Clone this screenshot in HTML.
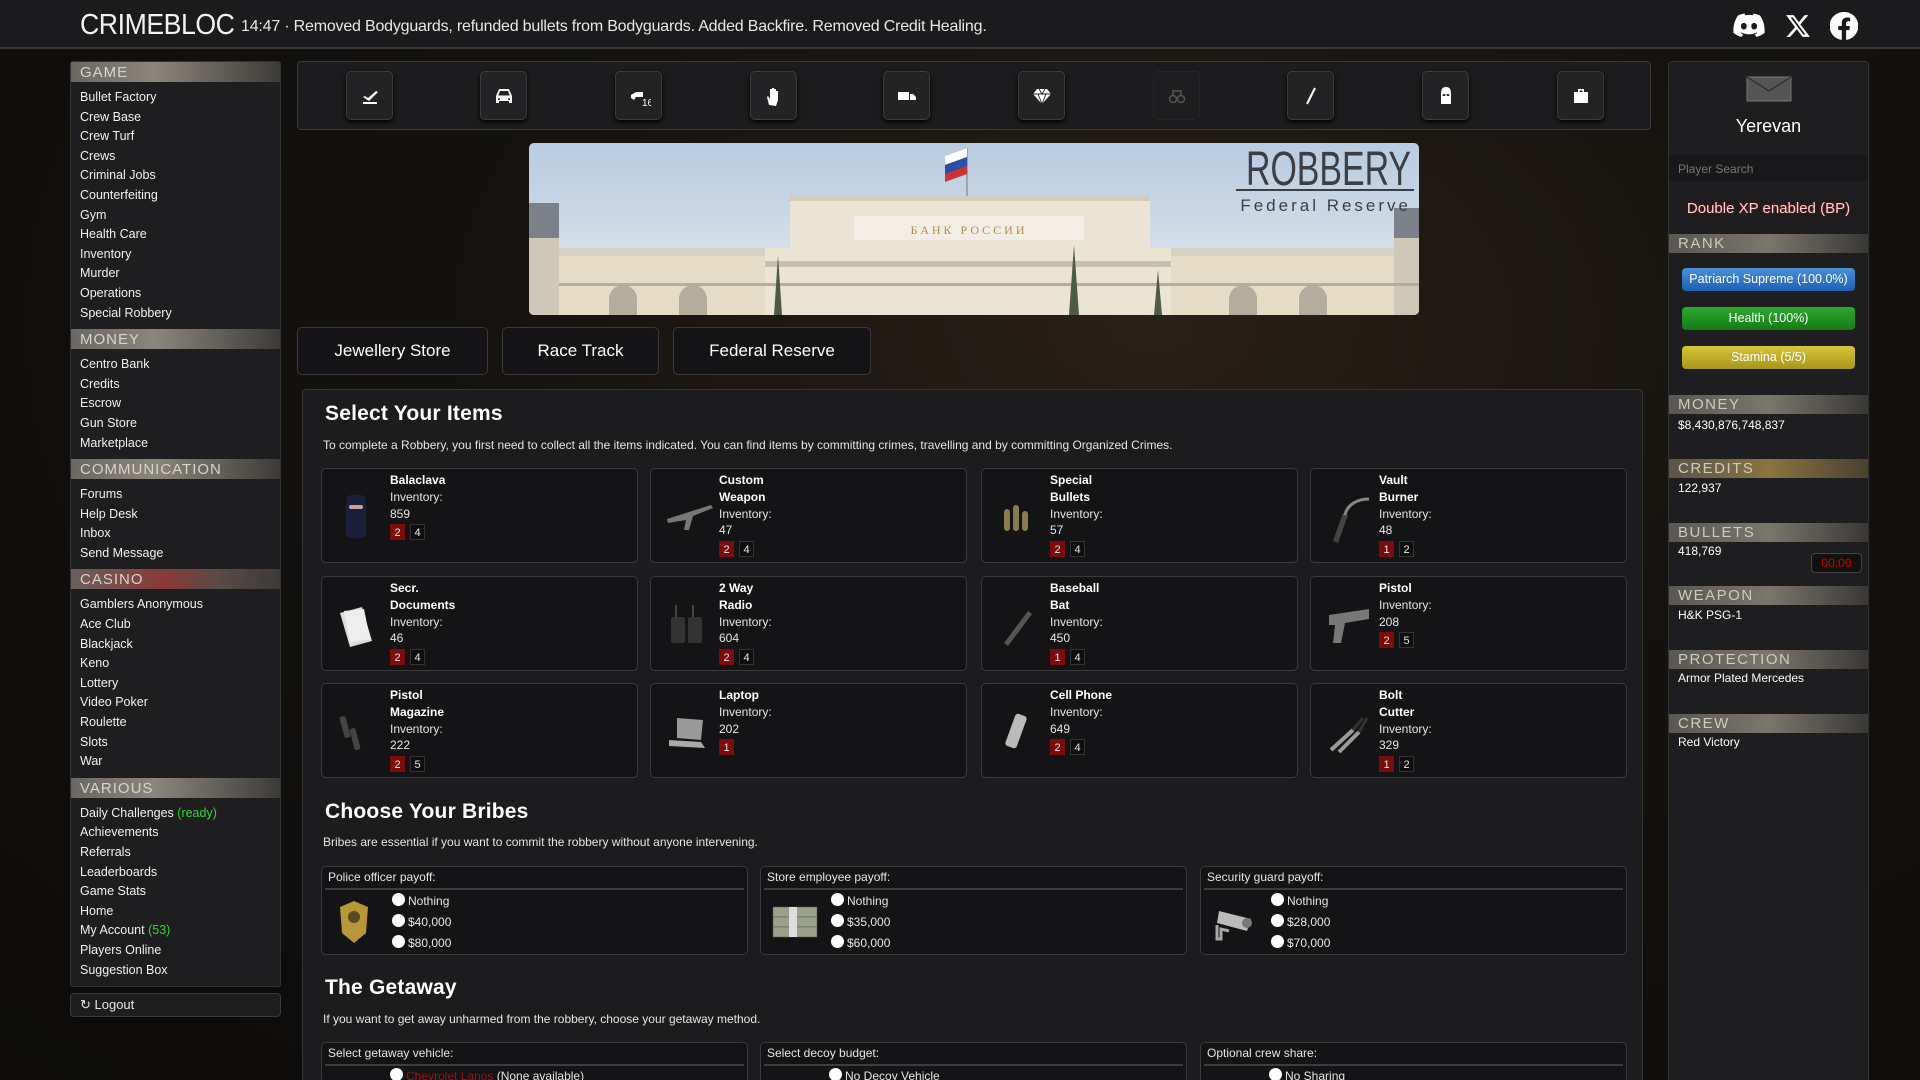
<!DOCTYPE html>
<html><head><meta charset="utf-8"><style>
*{box-sizing:border-box;margin:0;padding:0}
html{width:1920px;height:1080px;overflow:hidden}
body{width:1920px;height:1080px;overflow:hidden;background:radial-gradient(ellipse at 60% 30%,#2a2118 0%,#15120f 40%,#0c0b0a 100%);font-family:"Liberation Sans",sans-serif;color:#e6e6e6;position:relative}
.a{position:absolute}
#top{left:0;top:0;width:1920px;height:49px;background:#1b1a1c;border-bottom:2px solid #3a3836}
#logo{left:80px;top:9px;font-size:29px;color:#f2f2f2;letter-spacing:-0.5px;transform:scaleX(.92);transform-origin:left}
#news{left:241px;top:18px;font-size:16px;color:#e8e8e8;letter-spacing:-0.2px}
#side{left:70px;top:61px;width:211px;height:926px;background:#1e1d1f;border:1px solid #333;border-radius:3px;font-size:12.5px}
.hd{height:20px;background:linear-gradient(90deg,#6a6762,#8b867c 40%,#3d3b38);color:#d8d4cc;font-size:15px;letter-spacing:1px;padding:1px 9px;line-height:19px}
.ls{padding:6px 9px}
.ls div{height:19.6px;line-height:19.6px;color:#f2f2f2}
.g{color:#37d437}
#logout{left:70px;top:993px;width:211px;height:24px;background:#1e1d1f;border:1px solid #3a3a3a;border-radius:4px;font-size:13px;padding:3px 9px}
#ibar{left:297px;top:61px;width:1354px;height:69px;background:#1c1b1d;border:1px solid #3a3a3c;border-radius:4px}
.ib{position:absolute;top:9px;width:47px;height:49px;background:#232224;border:1px solid #3c3c3e;border-radius:5px;box-shadow:0 2px 4px #000}
.ib svg{position:absolute;left:13px;top:14px}
#ban{left:529px;top:143px;width:890px;height:172px;border-radius:5px;overflow:hidden}
.tab{position:absolute;top:327px;height:48px;background:#141315;border:1px solid #3a393c;border-radius:5px;font-size:17px;color:#fff;text-align:center;line-height:46px}
#main{left:302px;top:389px;width:1341px;height:691px;background:#1c1b1d;border:1px solid #333;border-bottom:none;border-radius:4px 4px 0 0}
h2{position:absolute;font-size:21px;font-weight:bold;color:#fff;letter-spacing:.2px}
.p{position:absolute;font-size:12px;color:#e6e6e6}
.card{position:absolute;width:317px;height:95px;background:#141316;border:1px solid #3a393c;border-radius:5px;font-size:12px;line-height:16.8px}
.card .t{position:absolute;left:68px;top:3px}
.card b{color:#fff}
.card svg{position:absolute;left:14px;top:22px}
.bd{display:inline-block;width:15px;height:16px;line-height:16px;text-align:center;font-size:11px;margin-right:5px;margin-top:2px;background:#0e0e10;border:1px solid #333}
.bd.r{background:#7c0b0b;border-color:#7c0b0b}
.box{position:absolute;width:427px;background:#141316;border:1px solid #3a393c;border-radius:5px;font-size:12px;overflow:hidden}
.box .tt{height:23px;line-height:21px;padding-left:3px;border-bottom:2px solid #3c3b3e;margin:0 3px}
.rad{position:absolute;left:70px;line-height:21px}
.rad i{display:inline-block;width:13px;height:13px;border-radius:50%;background:#fff;vertical-align:-1px;margin-right:3px}
#rp{left:1668px;top:61px;width:201px;height:1019px;background:#1e1d1f;border:1px solid #333;border-bottom:none;border-radius:4px 4px 0 0;font-size:12px}
.rh{position:absolute;left:0;width:199px;height:19px;background:linear-gradient(90deg,#5a5752,#7b766c 50%,#3a3835);color:#cfcac0;font-size:15px;letter-spacing:1.5px;padding-left:9px;line-height:19px}
.rv{position:absolute;left:9px;font-size:12px;color:#fff}
.bar{position:absolute;left:13px;width:173px;height:23px;border-radius:4px;color:#fff;text-align:center;line-height:23px;font-size:12.5px}
</style></head><body>
<div id="top" class="a"></div>
<div id="logo" class="a">CRIMEBLOC</div>
<div id="news" class="a">14:47 · Removed Bodyguards, refunded bullets from Bodyguards. Added Backfire. Removed Credit Healing.</div>
<svg class="a" style="left:1733px;top:13px" width="32" height="26" viewBox="0 0 32 26"><path fill="#fff" d="M27 2.5A26 26 0 0 0 20.5.5l-.8 1.7a24 24 0 0 0-7.4 0L11.5.5A26 26 0 0 0 5 2.5C1 8.5 0 14.3.5 20a26 26 0 0 0 8 4l1.7-2.7a17 17 0 0 1-2.6-1.3l.6-.5a18.5 18.5 0 0 0 15.6 0l.6.5a17 17 0 0 1-2.6 1.3l1.7 2.7a26 26 0 0 0 8-4c.6-6.6-1-12.4-4.5-17.5zM10.8 16.5c-1.6 0-2.9-1.5-2.9-3.3s1.3-3.3 2.9-3.3 2.9 1.5 2.9 3.3-1.3 3.3-2.9 3.3zm10.4 0c-1.6 0-2.9-1.5-2.9-3.3s1.3-3.3 2.9-3.3 2.9 1.5 2.9 3.3-1.3 3.3-2.9 3.3z"/></svg>
<svg class="a" style="left:1785px;top:13px" width="26" height="26" viewBox="0 0 24 24"><path fill="#fff" d="M18.2 2h3.4l-7.4 8.5L23 22h-6.8l-5.3-7-6.1 7H1.4l7.9-9L1 2h7l4.8 6.4zm-1.2 18h1.9L7.1 4H5.1z"/></svg>
<svg class="a" style="left:1830px;top:12px" width="28" height="28" viewBox="0 0 24 24"><path fill="#fff" d="M12 0a12 12 0 0 0-1.9 23.9v-8.4h-3V12h3V9.4c0-3 1.8-4.7 4.5-4.7 1.3 0 2.7.2 2.7.2v3h-1.5c-1.5 0-2 .9-2 1.9V12h3.3l-.5 3.5h-2.8v8.4A12 12 0 0 0 12 0z"/></svg>

<div id="side" class="a">
<div class="hd">GAME</div><div class="ls"><div>Bullet Factory</div><div>Crew Base</div><div>Crew Turf</div><div>Crews</div><div>Criminal Jobs</div><div>Counterfeiting</div><div>Gym</div><div>Health Care</div><div>Inventory</div><div>Murder</div><div>Operations</div><div>Special Robbery</div></div>
<div class="hd">MONEY</div><div class="ls"><div>Centro Bank</div><div>Credits</div><div>Escrow</div><div>Gun Store</div><div>Marketplace</div></div>
<div class="hd">COMMUNICATION</div><div class="ls"><div>Forums</div><div>Help Desk</div><div>Inbox</div><div>Send Message</div></div>
<div class="hd" style="background:linear-gradient(90deg,#6a5f5c,#8a3a38 45%,#5a4a46 70%,#3d3b38)">CASINO</div><div class="ls"><div>Gamblers Anonymous</div><div>Ace Club</div><div>Blackjack</div><div>Keno</div><div>Lottery</div><div>Video Poker</div><div>Roulette</div><div>Slots</div><div>War</div></div>
<div class="hd">VARIOUS</div><div class="ls"><div>Daily Challenges <span class="g">(ready)</span></div><div>Achievements</div><div>Referrals</div><div>Leaderboards</div><div>Game Stats</div><div>Home</div><div>My Account <span class="g">(53)</span></div><div>Players Online</div><div>Suggestion Box</div></div>
</div>
<div id="logout" class="a">↻ Logout</div>

<div id="ibar" class="a">
<div class="ib" style="left:48px"><svg width="20" height="20" viewBox="0 0 20 20" fill="#fff"><path d="M3 11l2-1 3 2 8-7 2 1-9 9z"/><rect x="3" y="16" width="14" height="2"/></svg></div>
<div class="ib" style="left:182px"><svg width="20" height="20" viewBox="0 0 20 20" fill="#fff"><path d="M5 3h10l3 7v7h-3v-2H5v2H2v-7zm1 2-1.8 4.5h11.6L14 5zM5 12a1 1 0 1 0 0 2 1 1 0 0 0 0-2zm10 0a1 1 0 1 0 0 2 1 1 0 0 0 0-2z"/></svg></div>
<div class="ib" style="left:317px"><svg width="22" height="22" viewBox="0 0 22 22" fill="#fff"><path d="M2 9l5-3h7v5H7l-2 3-3-2z"/><text x="13" y="20" font-size="10" fill="#fff" font-family="Liberation Sans">16</text></svg></div>
<div class="ib" style="left:452px"><svg width="20" height="20" viewBox="0 0 20 20" fill="#fff"><path d="M5 19l-2-8 1-1 2 3V3h2v7-8h2v8-7h2v8-6h2v9l-2 6z"/></svg></div>
<div class="ib" style="left:585px"><svg width="20" height="20" viewBox="0 0 20 20" fill="#fff"><path d="M1 6h11v8H1zm12 2h3l3 3v3h-6z"/></svg></div>
<div class="ib" style="left:720px"><svg width="20" height="20" viewBox="0 0 20 20" fill="#fff"><path d="M5 3h10l4 5-9 10L1 8z"/><path d="M1 8h18M7 3l3 5 3-5M6 8l4 10 4-10" stroke="#232224" stroke-width=".9" fill="none"/></svg></div>
<div class="ib" style="left:855px;background:#1e1d1f;border-color:#262527;box-shadow:none"><svg width="20" height="20" viewBox="0 0 20 20" fill="none" stroke="#555" stroke-width="1.5"><circle cx="6" cy="13" r="3.5"/><circle cx="14" cy="13" r="3.5"/><path d="M6 9V5h8v4"/></svg></div>
<div class="ib" style="left:989px"><svg width="20" height="20" viewBox="0 0 20 20"><path d="M14 2 6 18" stroke="#fff" stroke-width="2"/></svg></div>
<div class="ib" style="left:1124px"><svg width="20" height="20" viewBox="0 0 20 20" fill="#fff"><path d="M10 1c4 0 5 3 5 7v10H5V8c0-4 1-7 5-7z"/><ellipse cx="8" cy="9" rx="1.5" ry="1" fill="#232224"/><ellipse cx="12" cy="9" rx="1.5" ry="1" fill="#232224"/></svg></div>
<div class="ib" style="left:1259px"><svg width="20" height="20" viewBox="0 0 20 20" fill="#fff"><path d="M7 3h6v3h4v11H3V6h4zm1.5 1.5V6h3V4.5z"/></svg></div>
</div>

<div id="ban" class="a"><svg width="890" height="172" viewBox="0 0 890 172">
<defs><linearGradient id="sk" x1="0" y1="0" x2="0" y2="1"><stop offset="0" stop-color="#b8cbe0"/><stop offset="1" stop-color="#e4eaef"/></linearGradient></defs>
<rect width="890" height="172" fill="url(#sk)"/>
<rect x="0" y="110" width="890" height="62" fill="#e6dcc6"/>
<rect x="0" y="105" width="890" height="8" fill="#d8d2c4"/>
<rect x="0" y="62" width="30" height="110" fill="#cfc8b8"/><rect x="0" y="60" width="30" height="35" fill="#7b8089"/>
<rect x="865" y="65" width="25" height="107" fill="#cfc8b8"/><rect x="865" y="65" width="25" height="30" fill="#7b8089"/>
<rect x="236" y="105" width="406" height="67" fill="#ece4d2"/>
<rect x="261" y="55" width="360" height="55" fill="#ebe4d4"/>
<rect x="261" y="52" width="360" height="6" fill="#d4ccbc"/>
<rect x="325" y="73" width="230" height="24" fill="#f2eee5"/>
<text x="440" y="91" font-size="12" fill="#b09050" text-anchor="middle" font-family="Liberation Serif" letter-spacing="3">БАНК   РОССИИ</text>
<rect x="236" y="118" width="406" height="6" fill="#c8c0ae"/>
<g fill="#b5ad9b"><rect x="30" y="140" width="860" height="3"/><path d="M80 172v-16a14 14 0 0 1 28 0v16zM150 172v-16a14 14 0 0 1 28 0v16zM700 172v-16a14 14 0 0 1 28 0v16zM770 172v-16a14 14 0 0 1 28 0v16z"/></g>
<g fill="#4f5a45"><path d="M245 172l4-60 4 60zM540 172l5-70 5 70zM625 172l4-45 4 45z"/></g>
<path d="M438 5v48" stroke="#777" stroke-width="1"/><path d="M438 5l-22 8v26l22-8z" fill="#c33"/><path d="M438 5l-22 8v9l22-8z" fill="#fff"/><path d="M438 14l-22 8v9l22-8z" fill="#2a4fa8"/>
<text x="882" y="42" font-size="48" fill="#3b3f45" text-anchor="end" font-family="Liberation Sans Narrow,Liberation Sans" textLength="165" lengthAdjust="spacingAndGlyphs">ROBBERY</text>
<rect x="707" y="46" width="178" height="2" fill="#3b3f45"/>
<text x="882" y="68" font-size="17" fill="#3b3f45" text-anchor="end" font-family="Liberation Sans" letter-spacing="3">Federal Reserve</text>
</svg></div>

<div class="tab" style="left:297px;width:191px">Jewellery Store</div>
<div class="tab" style="left:502px;width:157px">Race Track</div>
<div class="tab" style="left:673px;width:198px">Federal Reserve</div>

<div id="main" class="a"></div>
<h2 style="left:325px;top:402px">Select Your Items</h2>
<div class="p" style="left:323px;top:438px">To complete a Robbery, you first need to collect all the items indicated. You can find items by committing crimes, travelling and by committing Organized Crimes.</div>

<div class="card" style="left:321px;top:468px"><svg width="40" height="50"><path d="M10 8c0-6 20-6 20 0v35c0 6-20 6-20 0z" fill="#1c1f3a"/><rect x="13" y="14" width="14" height="4" rx="2" fill="#c8a0a0"/></svg><div class="t"><b>Balaclava</b><br>Inventory:<br>859<br><span class="bd r">2</span><span class="bd">4</span></div></div>
<div class="card" style="left:650px;top:468px"><svg width="50" height="50"><path d="M2 28l44-14 2 3-20 8-4 14h-5l2-10-18 3z" fill="#777"/></svg><div class="t"><b>Custom<br>Weapon</b><br>Inventory:<br>47<br><span class="bd r">2</span><span class="bd">4</span></div></div>
<div class="card" style="left:981px;top:468px"><svg width="50" height="50"><g fill="#8a7a50"><rect x="8" y="18" width="6" height="22" rx="3"/><rect x="17" y="14" width="6" height="26" rx="3"/><rect x="26" y="20" width="6" height="20" rx="3"/></g></svg><div class="t"><b>Special<br>Bullets</b><br>Inventory:<br>57<br><span class="bd r">2</span><span class="bd">4</span></div></div>
<div class="card" style="left:1310px;top:468px"><svg width="50" height="55"><path d="M8 50l10-28 5 2-10 28z" fill="#444"/><path d="M20 24c2-10 12-16 24-16" stroke="#888" stroke-width="3" fill="none"/></svg><div class="t"><b>Vault<br>Burner</b><br>Inventory:<br>48<br><span class="bd r">1</span><span class="bd">2</span></div></div>

<div class="card" style="left:321px;top:576px"><svg width="50" height="50"><path d="M4 14l22-6 10 34-22 6z" fill="#ddd"/><path d="M8 12l20-2 6 30-20 3z" fill="#eee"/></svg><div class="t"><b>Secr.<br>Documents</b><br>Inventory:<br>46<br><span class="bd r">2</span><span class="bd">4</span></div></div>
<div class="card" style="left:650px;top:576px"><svg width="50" height="50"><rect x="6" y="18" width="14" height="26" rx="2" fill="#333"/><rect x="23" y="18" width="14" height="26" rx="2" fill="#333"/><rect x="10" y="6" width="2" height="12" fill="#444"/><rect x="27" y="6" width="2" height="12" fill="#444"/></svg><div class="t"><b>2 Way<br>Radio</b><br>Inventory:<br>604<br><span class="bd r">2</span><span class="bd">4</span></div></div>
<div class="card" style="left:981px;top:576px"><svg width="50" height="50"><path d="M8 44l24-32 4 3-24 32z" fill="#555"/></svg><div class="t"><b>Baseball<br>Bat</b><br>Inventory:<br>450<br><span class="bd r">1</span><span class="bd">4</span></div></div>
<div class="card" style="left:1310px;top:576px"><svg width="50" height="50"><path d="M4 16l40-6v10l-24 4-4 20H8l2-18H4z" fill="#777"/></svg><div class="t"><b>Pistol</b><br>Inventory:<br>208<br><span class="bd r">2</span><span class="bd">5</span></div></div>

<div class="card" style="left:321px;top:683px"><svg width="50" height="50"><rect x="6" y="10" width="6" height="22" rx="2" fill="#444" transform="rotate(-15 9 21)"/><rect x="16" y="22" width="6" height="22" rx="2" fill="#444" transform="rotate(-15 19 33)"/></svg><div class="t"><b>Pistol<br>Magazine</b><br>Inventory:<br>222<br><span class="bd r">2</span><span class="bd">5</span></div></div>
<div class="card" style="left:650px;top:683px"><svg width="50" height="50"><path d="M12 12l26 2-2 20-24-2z" fill="#999"/><path d="M4 34l32 2 4 6-36-2z" fill="#aaa"/></svg><div class="t"><b>Laptop</b><br>Inventory:<br>202<br><span class="bd r">1</span></div></div>
<div class="card" style="left:981px;top:683px"><svg width="50" height="50"><rect x="14" y="8" width="12" height="34" rx="3" fill="#bbb" transform="rotate(20 20 25)"/></svg><div class="t"><b>Cell Phone</b><br>Inventory:<br>649<br><span class="bd r">2</span><span class="bd">4</span></div></div>
<div class="card" style="left:1310px;top:683px"><svg width="50" height="50"><path d="M6 44l22-20M14 46l20-20" stroke="#999" stroke-width="4"/><path d="M28 24l10-12M34 26l8-14" stroke="#333" stroke-width="3"/></svg><div class="t"><b>Bolt<br>Cutter</b><br>Inventory:<br>329<br><span class="bd r">1</span><span class="bd">2</span></div></div>

<h2 style="left:325px;top:800px">Choose Your Bribes</h2>
<div class="p" style="left:323px;top:835px">Bribes are essential if you want to commit the robbery without anyone intervening.</div>

<div class="box" style="left:321px;top:866px;height:89px"><div class="tt">Police officer payoff:</div>
<svg class="a" style="left:14px;top:30px" width="36" height="50"><path d="M18 4l14 6-2 26-12 10-12-10-2-26z" fill="#b8963a"/><circle cx="18" cy="20" r="6" fill="#5a4a20"/></svg>
<div class="rad" style="top:24px"><i></i>Nothing</div><div class="rad" style="top:45px"><i></i>$40,000</div><div class="rad" style="top:66px"><i></i>$80,000</div></div>
<div class="box" style="left:760px;top:866px;height:89px"><div class="tt">Store employee payoff:</div>
<svg class="a" style="left:8px;top:32px" width="52" height="44"><g fill="#9aa08a" stroke="#555" stroke-width=".5"><rect x="4" y="8" width="44" height="10"/><rect x="4" y="18" width="44" height="10"/><rect x="4" y="28" width="44" height="10"/></g><rect x="20" y="8" width="8" height="30" fill="#ddd"/></svg>
<div class="rad" style="top:24px"><i></i>Nothing</div><div class="rad" style="top:45px"><i></i>$35,000</div><div class="rad" style="top:66px"><i></i>$60,000</div></div>
<div class="box" style="left:1200px;top:866px;height:89px"><div class="tt">Security guard payoff:</div>
<svg class="a" style="left:8px;top:32px" width="52" height="44"><path d="M10 12l32 8-4 12-30-8z" fill="#bbb"/><circle cx="38" cy="24" r="5" fill="#777"/><path d="M8 26v14h4v-10l8 2" stroke="#aaa" stroke-width="3" fill="none"/></svg>
<div class="rad" style="top:24px"><i></i>Nothing</div><div class="rad" style="top:45px"><i></i>$28,000</div><div class="rad" style="top:66px"><i></i>$70,000</div></div>

<h2 style="left:325px;top:976px">The Getaway</h2>
<div class="p" style="left:323px;top:1012px">If you want to get away unharmed from the robbery, choose your getaway method.</div>
<div class="box" style="left:321px;top:1042px;height:38px;border-bottom:none;border-radius:5px 5px 0 0"><div class="tt">Select getaway vehicle:</div><div class="rad" style="top:23px;left:68px"><i></i><span style="color:#8a1a1a">Chevrolet Lanos</span> (None available)</div></div>
<div class="box" style="left:760px;top:1042px;height:38px;border-bottom:none;border-radius:5px 5px 0 0"><div class="tt">Select decoy budget:</div><div class="rad" style="top:23px;left:68px"><i></i>No Decoy Vehicle</div></div>
<div class="box" style="left:1200px;top:1042px;height:38px;border-bottom:none;border-radius:5px 5px 0 0"><div class="tt">Optional crew share:</div><div class="rad" style="top:23px;left:68px"><i></i>No Sharing</div></div>

<div id="rp" class="a">
<svg class="a" style="left:77px;top:14px" width="46" height="26"><rect x="1" y="1" width="44" height="24" fill="#555" stroke="#777"/><path d="M1 1l22 14 22-14" stroke="#333" fill="none" stroke-width="1.5"/></svg>
<div class="a" style="left:0;width:199px;top:54px;text-align:center;font-size:18px;color:#fff">Yerevan</div>
<div class="a" style="left:0;top:93px;width:199px;height:26px;background:#18171a;color:#777;font-size:12px;padding:7px 9px">Player Search</div>
<div class="a" style="left:0;width:199px;top:138px;text-align:center;font-size:15px;color:#f0d8d8;text-shadow:0 0 2px #a00">Double XP enabled (BP)</div>
<div class="rh" style="top:172px">RANK</div>
<div class="bar" style="top:206px;background:linear-gradient(#4a90d8,#1e60b0)">Patriarch Supreme (100.0%)</div>
<div class="bar" style="top:245px;background:linear-gradient(#2eaa2e,#177a17)">Health (100%)</div>
<div class="bar" style="top:284px;background:linear-gradient(#d6c43a,#a8961a)">Stamina (5/5)</div>
<div class="rh" style="top:333px">MONEY</div><div class="rv" style="top:356px">$8,430,876,748,837</div>
<div class="rh" style="top:397px;background:linear-gradient(90deg,#5a5448,#8a7440 50%,#4a4030)">CREDITS</div><div class="rv" style="top:419px">122,937</div>
<div class="rh" style="top:461px">BULLETS</div><div class="rv" style="top:482px">418,769</div>
<div class="a" style="left:142px;top:491px;width:51px;height:20px;border:1px solid #444;border-radius:4px;background:#111;color:#c00;font-size:12px;text-align:center;line-height:18px">00:00</div>
<div class="rh" style="top:524px">WEAPON</div><div class="rv" style="top:546px">H&amp;K PSG-1</div>
<div class="rh" style="top:588px">PROTECTION</div><div class="rv" style="top:609px">Armor Plated Mercedes</div>
<div class="rh" style="top:652px">CREW</div><div class="rv" style="top:673px">Red Victory</div>
</div>
</body></html>
